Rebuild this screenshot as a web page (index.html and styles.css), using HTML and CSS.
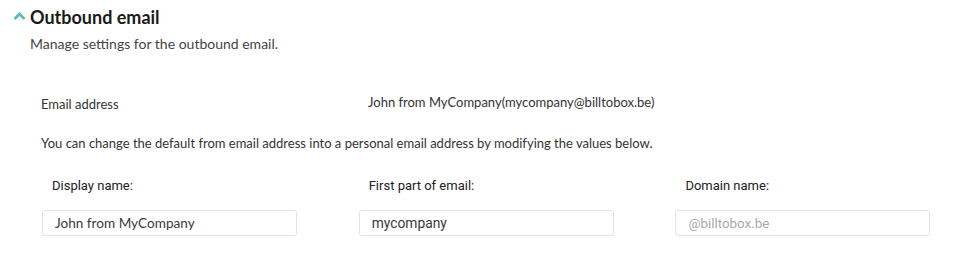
FILE: index.html
```html
<!DOCTYPE html>
<html>
<head>
<meta charset="utf-8">
<link rel="stylesheet" href="styles.css">
</head>
<body>
<section class="panel">
  <header class="panel-head">
    <svg class="chevron" width="13" height="8" viewBox="0 0 13 8"><path d="M1.5 7 L6.5 2 L11.5 7" fill="none" stroke="#5cbfb5" stroke-width="2.8"/></svg>
    <h2 class="title">Outbound email</h2>
  </header>
  <p class="subtitle">Manage settings for the outbound email.</p>
  <div class="body">
    <div class="info-row">
      <span class="info-label">Email address</span>
      <span class="info-value">John from MyCompany(mycompany@billtobox.be)</span>
    </div>
    <p class="hint">You can change the default from email address into a personal email address by modifying the values below.</p>
    <div class="fields">
      <div class="field">
        <label class="field-label">Display name:</label>
        <input class="input input-lato" type="text" value="John from MyCompany">
      </div>
      <div class="field">
        <label class="field-label">First part of email:</label>
        <input class="input" type="text" value="mycompany">
      </div>
      <div class="field">
        <label class="field-label">Domain name:</label>
        <input class="input" type="text" placeholder="@billtobox.be">
      </div>
    </div>
  </div>
</section>
</body>
</html>
```

FILE: styles.css
```css
html, body {
  margin: 0;
  padding: 0;
  background: #fff;
}
body {
  font-family: Lato, "Liberation Sans", sans-serif;
  color: #333;
}
.panel {
  padding: 6px 0 0 0;
}
.panel-head {
  display: flex;
  align-items: center;
  padding-left: 13px;
  height: 22px;
}
.chevron {
  margin-right: 4px;
  margin-top: -3px;
}
.title {
  margin: 0;
  font-size: 18px;
  font-weight: 700;
  color: #1a1a1a;
}
.subtitle {
  margin: 7px 0 0 30px;
  font-size: 14px;
  color: #444;
}
.body {
  padding: 0 0 0 32px;
}
.info-row {
  display: grid;
  grid-template-columns: 327px 1fr;
  margin-top: 44px;
  padding-left: 9px;
  font-size: 13px;
  color: #333;
}
.info-value {
  margin-top: -2px;
}
.hint {
  margin: 23px 0 0 9px;
  font-size: 13px;
  color: #333;
}
.fields {
  display: grid;
  grid-template-columns: repeat(3, 316.7px);
  margin-top: 27px;
}
.field {
  display: flex;
  flex-direction: column;
  padding-left: 10px;
}
.field-label {
  font-family: Roboto, "Liberation Sans", sans-serif;
  font-size: 13px;
  color: #222;
  padding-left: 10px;
  line-height: 16px;
}
.input {
  margin-top: 16px;
  box-sizing: border-box;
  width: 255px;
  height: 26px;
  border: 1px solid #e3e3e3;
  border-radius: 3px;
  padding: 0 12px;
  font-family: Roboto, "Liberation Sans", sans-serif;
  font-size: 13.8px;
  color: #3a3a3a;
  outline: none;
  background: #fff;
}
.input-lato {
  font-family: Lato, "Liberation Sans", sans-serif;
  font-size: 13.6px;
}
.input::placeholder {
  color: #aaa;
  font-size: 13.4px;
}
```
